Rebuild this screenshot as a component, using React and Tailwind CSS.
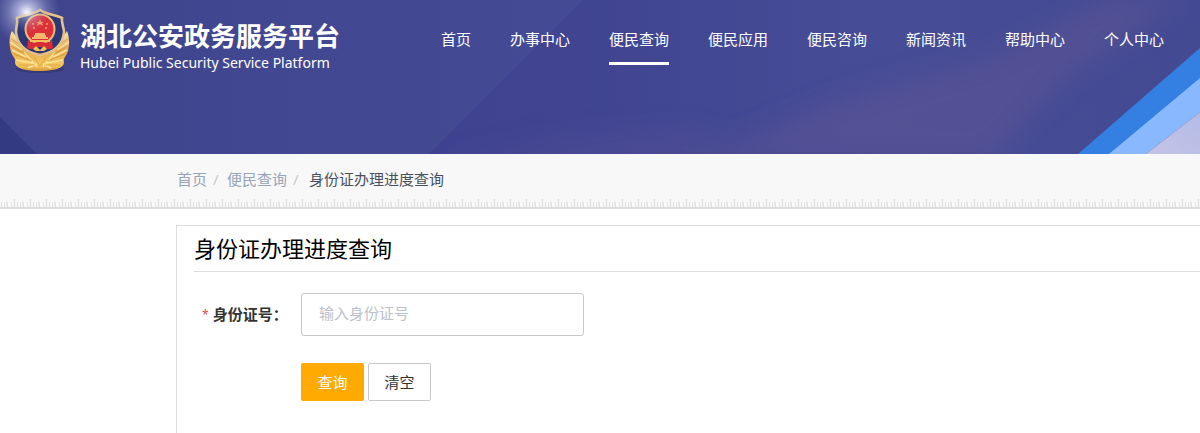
import { useState } from "react";

const navItems = [
  "首页",
  "办事中心",
  "便民查询",
  "便民应用",
  "便民咨询",
  "新闻资讯",
  "帮助中心",
  "个人中心",
];

const activeItem = "便民查询";

function HeaderBackdrop() {
  return (
    <svg
      className="absolute inset-0 h-full w-full"
      viewBox="0 0 1200 154"
      preserveAspectRatio="xMaxYMax slice"
      aria-hidden="true"
    >
      <defs>
        <linearGradient id="base" x1="0" y1="0" x2="1" y2="0">
          <stop offset="0" stopColor="#3f448c" />
          <stop offset="0.4" stopColor="#434a93" />
          <stop offset="0.7" stopColor="#474d96" />
          <stop offset="1" stopColor="#444a92" />
        </linearGradient>
        <linearGradient id="facet" x1="0" y1="0" x2="1" y2="0">
          <stop offset="0" stopColor="#3f4290" />
          <stop offset="1" stopColor="#3f4290" stopOpacity="0" />
        </linearGradient>
        <linearGradient id="corner" x1="0" y1="1" x2="1" y2="0">
          <stop offset="0" stopColor="#c5c3e6" />
          <stop offset="1" stopColor="#b3bce6" />
        </linearGradient>
        <radialGradient id="glow">
          <stop offset="0" stopColor="#fff" stopOpacity="0.95" />
          <stop offset="0.25" stopColor="#d5daf5" stopOpacity="0.6" />
          <stop offset="1" stopColor="#8f96d0" stopOpacity="0" />
        </radialGradient>
        <filter id="soft" x="-20%" y="-50%" width="140%" height="200%">
          <feGaussianBlur stdDeviation="14" />
        </filter>
      </defs>
      <rect width="1200" height="154" fill="url(#base)" />
      <path d="M583 0H900V154H429Z" fill="url(#facet)" />
      <g filter="url(#soft)" fill="#5f5596" fillOpacity="0.5">
        <path d="M700 160L830 105L990 60L1110 0H1180L1060 80L990 160Z" />
        <path d="M430 165L560 140L700 130L760 165Z" fillOpacity="0.3" />
      </g>
      <path d="M0 117L37 154H0Z" fill="#343a82" />
      <path d="M1200 48L1078 154H1110L1200 79Z" fill="#347fe2" />
      <path d="M1200 78L1109 154H1146L1200 112Z" fill="#8ab8ff" />
      <path d="M1200 112L1146 154H1200Z" fill="url(#corner)" />
    </svg>
  );
}

function PoliceBadge() {
  return (
    <svg
      className="h-20 w-20 shrink-0"
      viewBox="0 0 80 80"
      role="img"
      aria-label="警徽"
    >
      <defs>
        <linearGradient id="gold" x1="0" y1="0" x2="0" y2="1">
          <stop offset="0" stopColor="#f3ddb0" />
          <stop offset="0.5" stopColor="#e5ac50" />
          <stop offset="0.85" stopColor="#f6c95f" />
          <stop offset="1" stopColor="#d99a3a" />
        </linearGradient>
      </defs>
      <ellipse cx="40" cy="69" rx="24" ry="4" fill="#2c2f66" opacity="0.5" />
      <circle cx="26" cy="12" r="34" fill="url(#glow)" />
      {/* wheat ears */}
      <path
        d="M12 31C9 36 9 45 11 52C13 58 16 58 15 62C15 69 27 71 39 71C52 71 64 69 64 62C63 58 66 57 68 51C70 43 69 36 67 31L56 46L40 54L24 46Z"
        fill="url(#gold)"
      />
      <g fill="none" stroke="#fbe596" strokeWidth="1.4">
        <path d="M12 35L21 43M10 42L22 50M12 50L26 57M16 60L33 63M67 35L58 43M69 42L57 50M67 50L53 57M63 60L47 63M24 52L37 67M55 52L43 67M28 68L37 64M51 68L43 64" />
      </g>
      <g fill="none" stroke="#ba7421" strokeWidth="0.6" opacity="0.7">
        <path d="M11 39L22 46M11 46L25 54M14 54L32 61M68 39L57 46M68 46L54 54M65 54L47 61M19 65L35 65M60 65L44 65M34 57L40 66L46 57" />
      </g>
      {/* shield */}
      <path
        d="M40 10C35 14 24 15 17 18C18 23 16 27 16 32C17 44 24 52 40 55C56 52 63 44 64 32C64 27 61 23 62 18C55 15 45 14 40 10Z"
        fill="#2c3779"
        stroke="#e6c288"
        strokeWidth="2.6"
      />
      <circle cx="40" cy="29" r="14.5" fill="#dc303b" stroke="#f1bd73" strokeWidth="2" />
      <path
        d="M28 40C32 44 36 43 40 41C44 43 48 44 52 40L53 48C48 51 44 47 40 47C36 47 32 51 27 48Z"
        fill="#d92d35"
      />
      <path d="M30 40H50V42H30ZM33 49L36 46L40 50L44 46L47 49L44 51H36Z" fill="#f2c15a" />
      <path d="M35 33H45V35H46V37H48V39H32V37H34V35H35Z" fill="#f4b96c" />
      <path
        d="M40 19L41 22H44L42 23L43 26L40 24L37 26L38 23L36 22H39Z"
        fill="#f2a15a"
      />
      <g fill="#f2a15a">
        <circle cx="33" cy="24" r="1" />
        <circle cx="47" cy="24" r="1" />
        <circle cx="34" cy="28" r="1" />
        <circle cx="46" cy="28" r="1" />
      </g>
      <circle cx="28" cy="13" r="20" fill="url(#glow)" opacity="0.7" />
    </svg>
  );
}

function Header() {
  return (
    <header className="relative h-[154px] overflow-hidden bg-[#434a93] text-white">
      <HeaderBackdrop />
      <div className="relative flex items-start justify-between pr-9">
        <a href="#" className="flex items-start">
          <PoliceBadge />
          <span className="flex flex-col pt-[18px]">
            <span className="text-[26px] leading-9 font-bold whitespace-nowrap">
              湖北公安政务服务平台
            </span>
            <span className="text-sm leading-[18px] whitespace-nowrap">
              Hubei Public Security Service Platform
            </span>
          </span>
        </a>
        <nav className="flex gap-[39px] pt-[25px]">
          {navItems.map((item) => (
            <a
              key={item}
              href="#"
              aria-current={item === activeItem ? "page" : undefined}
              className={`border-b-3 pb-2 text-[15px] leading-[29px] whitespace-nowrap ${
                item === activeItem ? "border-white" : "border-transparent"
              }`}
            >
              {item}
            </a>
          ))}
        </nav>
      </div>
    </header>
  );
}

function Ruler() {
  return (
    <svg className="block h-2 w-full" aria-hidden="true">
      <defs>
        <pattern id="ticks" width="16" height="8" patternUnits="userSpaceOnUse">
          <path d="M14.5 0V8" stroke="#d9d9d9" />
          <path d="M1.5 3V8M4.5 3V8M7.5 3V8M11.5 3V8" stroke="#e3e3e3" />
          <path d="M6.5 1V8" stroke="#e9e9e9" />
        </pattern>
      </defs>
      <rect width="100%" height="8" fill="url(#ticks)" />
    </svg>
  );
}

function Breadcrumb() {
  return (
    <div className="border-b-2 border-[#dddddd] bg-[#f8f8f8]">
      <nav
        aria-label="breadcrumb"
        className="flex h-[45px] items-center pt-1.5 pl-[177px] text-[15px] text-[#97a3b8]"
      >
        <a href="#">首页</a>
        <span className="w-5 pl-1.5 text-[#c5c9d0]">/</span>
        <a href="#">便民查询</a>
        <span className="w-[22px] pl-1.5 text-[#c5c9d0]">/</span>
        <span className="text-[#48505e]">身份证办理进度查询</span>
      </nav>
      <Ruler />
    </div>
  );
}

export default function App() {
  const [idNumber, setIdNumber] = useState("");

  return (
    <div className="min-h-screen overflow-hidden bg-white font-['Noto_Sans','Noto_Sans_CJK_SC',sans-serif]">
      <Header />
      <Breadcrumb />

      <main className="mt-4 ml-44 border-t border-l border-[#dddddd] pl-[17px]">
        <h1 className="border-b border-[#dddddd] pt-1 pb-[5px] text-[22px] leading-9 text-black">
          身份证办理进度查询
        </h1>

        <form className="pt-[21px] pb-8" onSubmit={(e) => e.preventDefault()}>
          <div className="flex items-center">
            <label
              htmlFor="id-number"
              className="flex w-[107px] items-center gap-1 pl-2 text-[15px] font-bold whitespace-nowrap text-[#333333]"
            >
              <span className="text-xs font-normal text-[#f04848]">*</span>
              身份证号：
            </label>
            <input
              id="id-number"
              type="text"
              value={idNumber}
              onChange={(e) => setIdNumber(e.target.value)}
              placeholder="输入身份证号"
              className="h-[43px] w-[283px] rounded-[3px] border border-[#c8c8c8] px-[17px] pb-1 text-[15px] text-[#333333] outline-none placeholder:text-[#bcc1c9]"
            />
          </div>

          <div className="mt-[27px] flex gap-1 pl-[107px] text-[15px]">
            <button
              type="submit"
              className="h-[38px] w-[63px] rounded-xs bg-[#ffaa00] text-white"
            >
              查询
            </button>
            <button
              type="button"
              onClick={() => setIdNumber("")}
              className="h-[38px] w-[63px] rounded-xs border border-[#c9c9c9] bg-white text-[#333333]"
            >
              清空
            </button>
          </div>
        </form>
      </main>
    </div>
  );
}
